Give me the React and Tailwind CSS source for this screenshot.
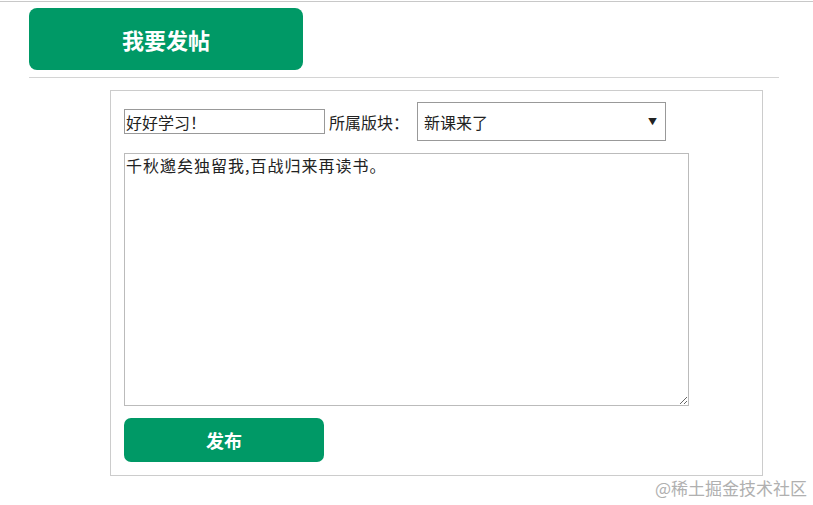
import React from 'react';

const font = { fontFamily: '"Noto Sans CJK SC", "Noto Sans", sans-serif' };

const App = () => {
  return (
    <div className="relative w-[813px] h-[505px] bg-white overflow-hidden text-[#222]" style={font}>
      {/* 顶部细线 */}
      <div className="mt-px h-px bg-[#c8c8c8]" />

      {/* 标题按钮 */}
      <div className="ml-[29px] mt-[6px] w-[274px] h-[62px] rounded-[8px] bg-[#009966] flex items-center justify-center">
        <span className="text-white text-[22px] font-bold">我要发帖</span>
      </div>

      <div className="ml-[29px] mt-[7px] w-[750px] h-px bg-[#d4d4d4]" />

      {/* 发帖表单 */}
      <div className="ml-[110px] mt-[12px] w-[653px] h-[386px] border border-[#cccccc] pl-[13px] pt-[11px]">
        <div className="flex items-center">
          <input
            className="w-[201px] h-[25px] border border-[#999] px-[1px] text-[16px] leading-none outline-none"
            defaultValue="好好学习！"
            style={font}
          />
          <span className="ml-[4px] text-[16px]">所属版块：</span>
          <div className="ml-[8px] w-[249px] h-[39px] border border-[#999] flex items-center justify-between pl-[6px] pr-[8px]">
            <span className="text-[16px]">新课来了</span>
            <span className="text-[9px]">▼</span>
          </div>
        </div>

        <textarea
          className="block mt-[12px] w-[565px] h-[253px] border border-[#bbb] px-[1px] py-0 text-[16px] tracking-[1px] leading-[22px] outline-none"
          defaultValue="千秋邈矣独留我,百战归来再读书。"
          style={font}
        />

        <div className="mt-[12px] w-[200px] h-[44px] rounded-[7px] bg-[#009966] flex items-center justify-center">
          <span className="text-white text-[18px] font-bold">发布</span>
        </div>
      </div>

      {/* 水印 */}
      <div className="absolute right-[6px] bottom-[5px] text-[17px] text-[#b0b0b0]">@稀土掘金技术社区</div>
    </div>
  );
};

export default App;
